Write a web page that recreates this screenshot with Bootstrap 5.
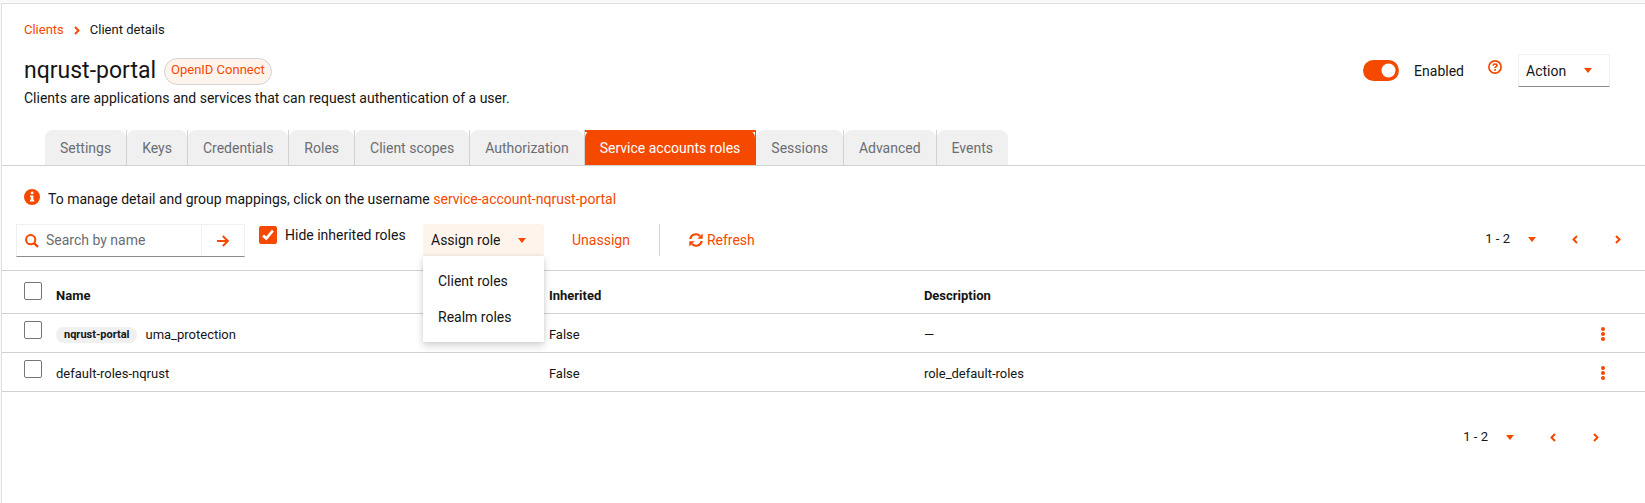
<!DOCTYPE html>
<html lang="en">
<head>
<meta charset="utf-8">
<meta name="viewport" content="width=device-width, initial-scale=1">
<title>Client details</title>
<link href="https://cdn.jsdelivr.net/npm/bootstrap@5.3.0/dist/css/bootstrap.min.css" rel="stylesheet">
<style>
  :root { --brand: #f54900; --brand-soft: #fff4ec; --line: #d2d2d2; --ink: #151515; --muted: #6a6e73; }
  body { background: #fafafa; color: var(--ink); font: 14px/20px Roboto, "Noto Sans", sans-serif; padding: 3px 0 0 1px; }
  a { color: var(--brand); text-decoration: none; }
  button { font-size: 14px; color: var(--ink); }
  svg { display: block; fill: currentColor; }
  .text-brand { color: var(--brand); }
  .page { background: #fff; border: solid #e0e0e0; border-width: 1px 0 0 1px; min-height: calc(100vh - 3px); }
  .page-head { padding: 16px 35px 0 22px; }
  .head-row { padding-top: 14px; }
  .title-row { padding: 3px 0; }
  .breadcrumb { font-size: 13px; line-height: 20px; gap: 10px; --bs-breadcrumb-item-padding-x: 0; }
  .breadcrumb-item + .breadcrumb-item::before { display: none; }
  h1 { font-size: 23px; line-height: 28px; font-weight: 400; }
  .type-label { font-size: 13px; line-height: 20px; color: var(--brand); background: var(--brand-soft); border: 1px solid var(--line); border-radius: 16px; padding: 1px 6px 4px; }
  .form-check-input { width: 18px; height: 18px; margin: 0; border: 1px solid #767676; box-shadow: none; }
  .form-check-input[type=checkbox] { border-radius: 2px; }
  .form-check-input:checked { background-color: var(--brand); border-color: var(--brand); }
  .form-check-input:checked[type=checkbox] { background-image: url("data:image/svg+xml,%3csvg xmlns='http://www.w3.org/2000/svg' viewBox='0 0 18 18'%3e%3cpath fill='none' stroke='%23fff' stroke-width='3' d='M3.500 9.500l3.500 3.500 7.500-9'/%3e%3c/svg%3e"); }
  .form-switch .form-check-input[type=checkbox] { width: 36px; height: 21px; border: 0; border-radius: 21px; margin: 0 15px 0 0; }
  .form-switch .form-check-input:checked[type=checkbox] { background-image: url("data:image/svg+xml,%3csvg xmlns='http://www.w3.org/2000/svg' viewBox='-10.500 -10.500 21 21'%3e%3ccircle r='7' fill='%23fff'/%3e%3c/svg%3e"); }
  .plain { border: 0; background: none; padding: 0; }
  .boxed { border: 1px solid #f0f0f0; border-bottom-color: #8a8d90; background: #fff; }
  .action-toggle { width: 92px; height: 33px; padding: 0 17px 0 7px; }
  .nav-tabs { --bs-nav-tabs-border-color: var(--line); padding-left: 43px; margin-top: 22px; }
  .nav-tabs .nav-item { border-right: 1px solid var(--line); }
  .nav-tabs .nav-item:last-child { border-right: 0; }
  .nav-tabs .nav-link { border: 0; border-radius: 8px 8px 0 0; background: #f0f0f0; color: var(--muted); padding: 8px 15px 7px; height: 35px; margin: 0; }
  .nav-tabs .nav-link.active { background: var(--brand); color: #fff; }
  .nav-tabs .current { border-right-color: var(--brand); background: linear-gradient(var(--brand) 0 2px, #fff 2px); }
  .toolbar { padding: 19px 6px 13px 14px; }
  .tools { margin-top: 15px; }
  .search { width: 229px; height: 33px; }
  .search input { border: 0; padding: 0 0 0 7px; font-size: 14px; color: var(--ink); box-shadow: none !important; }
  .search input::placeholder { color: var(--muted); }
  .search button { width: 43px; border-left: 1px solid #f0f0f0; }
  .hide-roles { width: 164px; margin-left: 14px; padding-top: 1px; }
  .assign { width: 121px; }
  .assign-toggle { height: 32px; background: var(--brand-soft); border-radius: 3px 3px 0 0; padding: 0 18px 0 8px; }
  .assign .dropdown-menu { top: 100%; min-width: 100%; margin: 0; padding: 7px 0; border: 0; border-radius: 0; font-size: 14px; box-shadow: 0 4px 8px rgba(3,3,3,.16), 0 0 4px rgba(3,3,3,.08); }
  .assign .dropdown-item { padding: 8px 15px; color: var(--ink); }
  .links { margin-left: 28px; }
  .rule { width: 1px; height: 32px; background: var(--line); margin: 0 29px; }
  .pager { font-size: 13px; }
  .pager button { width: 43px; }
  .pager .plain { display: flex; justify-content: center; }
  .pager-top { padding-top: 5px; }
  .pager-bottom { padding: 35px 28px 0 0; }
  .roles { table-layout: fixed; font-size: 13px; line-height: 18px; margin: 0; border-top: 1px solid var(--line); color: var(--ink); }
  .roles > * > tr > * { border-bottom: 1px solid var(--line); background: none; vertical-align: top; }
  .roles > thead > tr > th { font-weight: 700; height: 43px; padding: 16px 0 8px; }
  .roles > tbody > tr > td { height: 39px; padding: 12px 0 8px; }
  .roles > thead > tr > .pick { padding: 11px 0 0 22px; }
  .roles > tbody > tr > .pick { padding: 7px 0 0 22px; }
  .roles .form-check-input { display: block; }
  .roles .plain { display: block; padding: 1px 0 3px; }
  .c-pick { width: 54px; } .c-name { width: 30%; } .c-inh { width: 375px; } .c-menu { width: 44px; }
  .owner { display: block; font-size: 11px; line-height: 16px; font-weight: 700; background: #f0f0f0; border-radius: 8px; padding: 0 8px; }
</style>
</head>
<body>
<svg class="d-none" aria-hidden="true">
  <symbol id="caret" viewBox="0 0 8 5"><path d="M0 0h8L4 5z"/></symbol>
  <symbol id="left" viewBox="0 0 6 9"><path d="M5 1L1.500 4.500 5 8" fill="none" stroke="currentColor" stroke-width="2"/></symbol>
  <symbol id="right" viewBox="0 0 6 9"><path d="M1 1l3.500 3.500L1 8" fill="none" stroke="currentColor" stroke-width="2"/></symbol>
  <symbol id="kebab" viewBox="0 0 4 14"><circle cx="2" cy="2" r="2"/><circle cx="2" cy="7" r="2"/><circle cx="2" cy="12" r="2"/></symbol>
</svg>
<main class="page">
  <header class="page-head">
    <nav aria-label="breadcrumb">
      <ol class="breadcrumb align-items-center mb-0">
        <li class="breadcrumb-item"><a href="#">Clients</a></li>
        <li class="text-brand" aria-hidden="true"><svg width="6" height="9"><use href="#right"/></svg></li>
        <li class="breadcrumb-item">Client details</li>
      </ol>
    </nav>
    <div class="head-row d-flex align-items-start justify-content-between">
      <div>
        <div class="title-row d-flex align-items-center gap-2">
          <h1 class="mb-0">nqrust-portal</h1>
          <span class="type-label">OpenID Connect</span>
        </div>
        <p class="mb-0">Clients are applications and services that can request authentication of a user.</p>
      </div>
      <div class="d-flex align-items-center">
        <div class="form-check form-switch d-flex align-items-center p-0 m-0">
          <input class="form-check-input" type="checkbox" role="switch" id="enabled" checked>
          <label for="enabled">Enabled</label>
        </div>
        <button class="plain text-brand ms-4 mb-2 me-3" aria-label="Help">
          <svg width="14" height="14" viewBox="0 0 14 14"><circle cx="7" cy="7" r="6.100" fill="none" stroke="currentColor" stroke-width="1.700"/><path d="M5 5.600C5.200 4.400 6 4 7 4c1.200 0 2 .6 2 1.500C9 6.700 7 6.700 7 8" fill="none" stroke="currentColor" stroke-width="1.700"/><circle cx="7" cy="10" r="1.100"/></svg>
        </button>
        <button class="boxed action-toggle d-flex align-items-center justify-content-between">Action<svg class="text-brand" width="8" height="5"><use href="#caret"/></svg></button>
      </div>
    </div>
  </header>

  <ul class="nav nav-tabs">
    <li class="nav-item"><a class="nav-link" href="#">Settings</a></li>
    <li class="nav-item"><a class="nav-link" href="#">Keys</a></li>
    <li class="nav-item"><a class="nav-link" href="#">Credentials</a></li>
    <li class="nav-item"><a class="nav-link" href="#">Roles</a></li>
    <li class="nav-item"><a class="nav-link" href="#">Client scopes</a></li>
    <li class="nav-item"><a class="nav-link" href="#">Authorization</a></li>
    <li class="nav-item current"><a class="nav-link active" href="#" aria-current="page">Service accounts roles</a></li>
    <li class="nav-item"><a class="nav-link" href="#">Sessions</a></li>
    <li class="nav-item"><a class="nav-link" href="#">Advanced</a></li>
    <li class="nav-item"><a class="nav-link" href="#">Events</a></li>
  </ul>

  <div class="toolbar">
    <p class="d-flex align-items-start mb-0 pt-1 ps-2">
      <svg class="text-brand me-2" width="16" height="16" viewBox="0 0 16 16"><path fill-rule="evenodd" d="M8 0a8 8 0 100 16A8 8 0 008 0zM6.700 3.900a1.400 1.400 0 102.800 0 1.400 1.400 0 00-2.800 0zM6 6.500v1.600h.8v2.700H6v1.600h4.200v-1.600h-.8V6.500z"/></svg>
      <span>To manage detail and group mappings, click on the username <a href="#">service-account-nqrust-portal</a></span>
    </p>
    <div class="tools d-flex align-items-start">
      <div class="boxed search d-flex align-items-center">
        <svg class="text-brand ms-2 flex-shrink-0" width="14" height="14" viewBox="0 0 14 14"><path d="M9.300 9.300L13 13" stroke="currentColor" stroke-width="2.400"/><circle cx="5.700" cy="5.700" r="4.600" fill="none" stroke="currentColor" stroke-width="2"/></svg>
        <input class="form-control flex-fill" type="text" placeholder="Search by name" aria-label="Search by name">
        <button class="plain text-brand align-self-stretch d-flex align-items-center justify-content-center flex-shrink-0" aria-label="Search"><svg width="12" height="12" viewBox="0 0 12 12"><path d="M0 6h10.500M5.800 1l5 5-5 5" fill="none" stroke="currentColor" stroke-width="1.900"/></svg></button>
      </div>
      <div class="d-flex align-items-center gap-2 hide-roles">
        <input class="form-check-input" type="checkbox" id="hide" checked>
        <label for="hide">Hide inherited roles</label>
      </div>
      <div class="dropdown assign">
        <button class="plain assign-toggle w-100 d-flex align-items-center justify-content-between" aria-expanded="true">Assign role<svg class="text-brand" width="8" height="5"><use href="#caret"/></svg></button>
        <ul class="dropdown-menu show">
          <li><a class="dropdown-item" href="#">Client roles</a></li>
          <li><a class="dropdown-item" href="#">Realm roles</a></li>
        </ul>
      </div>
      <div class="d-flex align-items-center links">
        <button class="plain text-brand">Unassign</button>
        <span class="rule"></span>
        <button class="plain text-brand d-flex align-items-center gap-1"><svg width="14" height="14" viewBox="0 0 14 14"><path d="M1.200 6A5.800 5.800 0 0111 3M12.800 8A5.800 5.800 0 013 11" fill="none" stroke="currentColor" stroke-width="2.200"/><path d="M13.700.4v5.400H8.300zM.3 13.600V8.200h5.400z"/></svg>Refresh</button>
      </div>
      <div class="pager pager-top d-flex align-items-center ms-auto">
        <span>1 - 2</span>
        <button class="plain text-brand" aria-label="Page size"><svg width="8" height="5"><use href="#caret"/></svg></button>
        <button class="plain text-brand" aria-label="Previous page"><svg width="6" height="9"><use href="#left"/></svg></button>
        <button class="plain text-brand" aria-label="Next page"><svg width="6" height="9"><use href="#right"/></svg></button>
      </div>
    </div>
  </div>

  <table class="table roles">
    <colgroup><col class="c-pick"><col class="c-name"><col class="c-inh"><col><col class="c-menu"></colgroup>
    <thead>
      <tr><th class="pick"><input class="form-check-input" type="checkbox" aria-label="Select all"></th><th>Name</th><th>Inherited</th><th>Description</th><th></th></tr>
    </thead>
    <tbody>
      <tr><td class="pick"><input class="form-check-input" type="checkbox" aria-label="Select uma_protection"></td><td><div class="d-flex align-items-center gap-2"><span class="owner">nqrust-portal</span>uma_protection</div></td><td>False</td><td>—</td><td><button class="plain text-brand" aria-label="Actions"><svg width="4" height="14"><use href="#kebab"/></svg></button></td></tr>
      <tr><td class="pick"><input class="form-check-input" type="checkbox" aria-label="Select default-roles-nqrust"></td><td>default-roles-nqrust</td><td>False</td><td>role_default-roles</td><td><button class="plain text-brand" aria-label="Actions"><svg width="4" height="14"><use href="#kebab"/></svg></button></td></tr>
    </tbody>
  </table>

  <div class="pager pager-bottom d-flex align-items-center justify-content-end">
    <span>1 - 2</span>
    <button class="plain text-brand" aria-label="Page size"><svg width="8" height="5"><use href="#caret"/></svg></button>
    <button class="plain text-brand" aria-label="Previous page"><svg width="6" height="9"><use href="#left"/></svg></button>
    <button class="plain text-brand" aria-label="Next page"><svg width="6" height="9"><use href="#right"/></svg></button>
  </div>
</main>
<script src="https://cdn.jsdelivr.net/npm/bootstrap@5.3.0/dist/js/bootstrap.bundle.min.js"></script>
</body>
</html>
